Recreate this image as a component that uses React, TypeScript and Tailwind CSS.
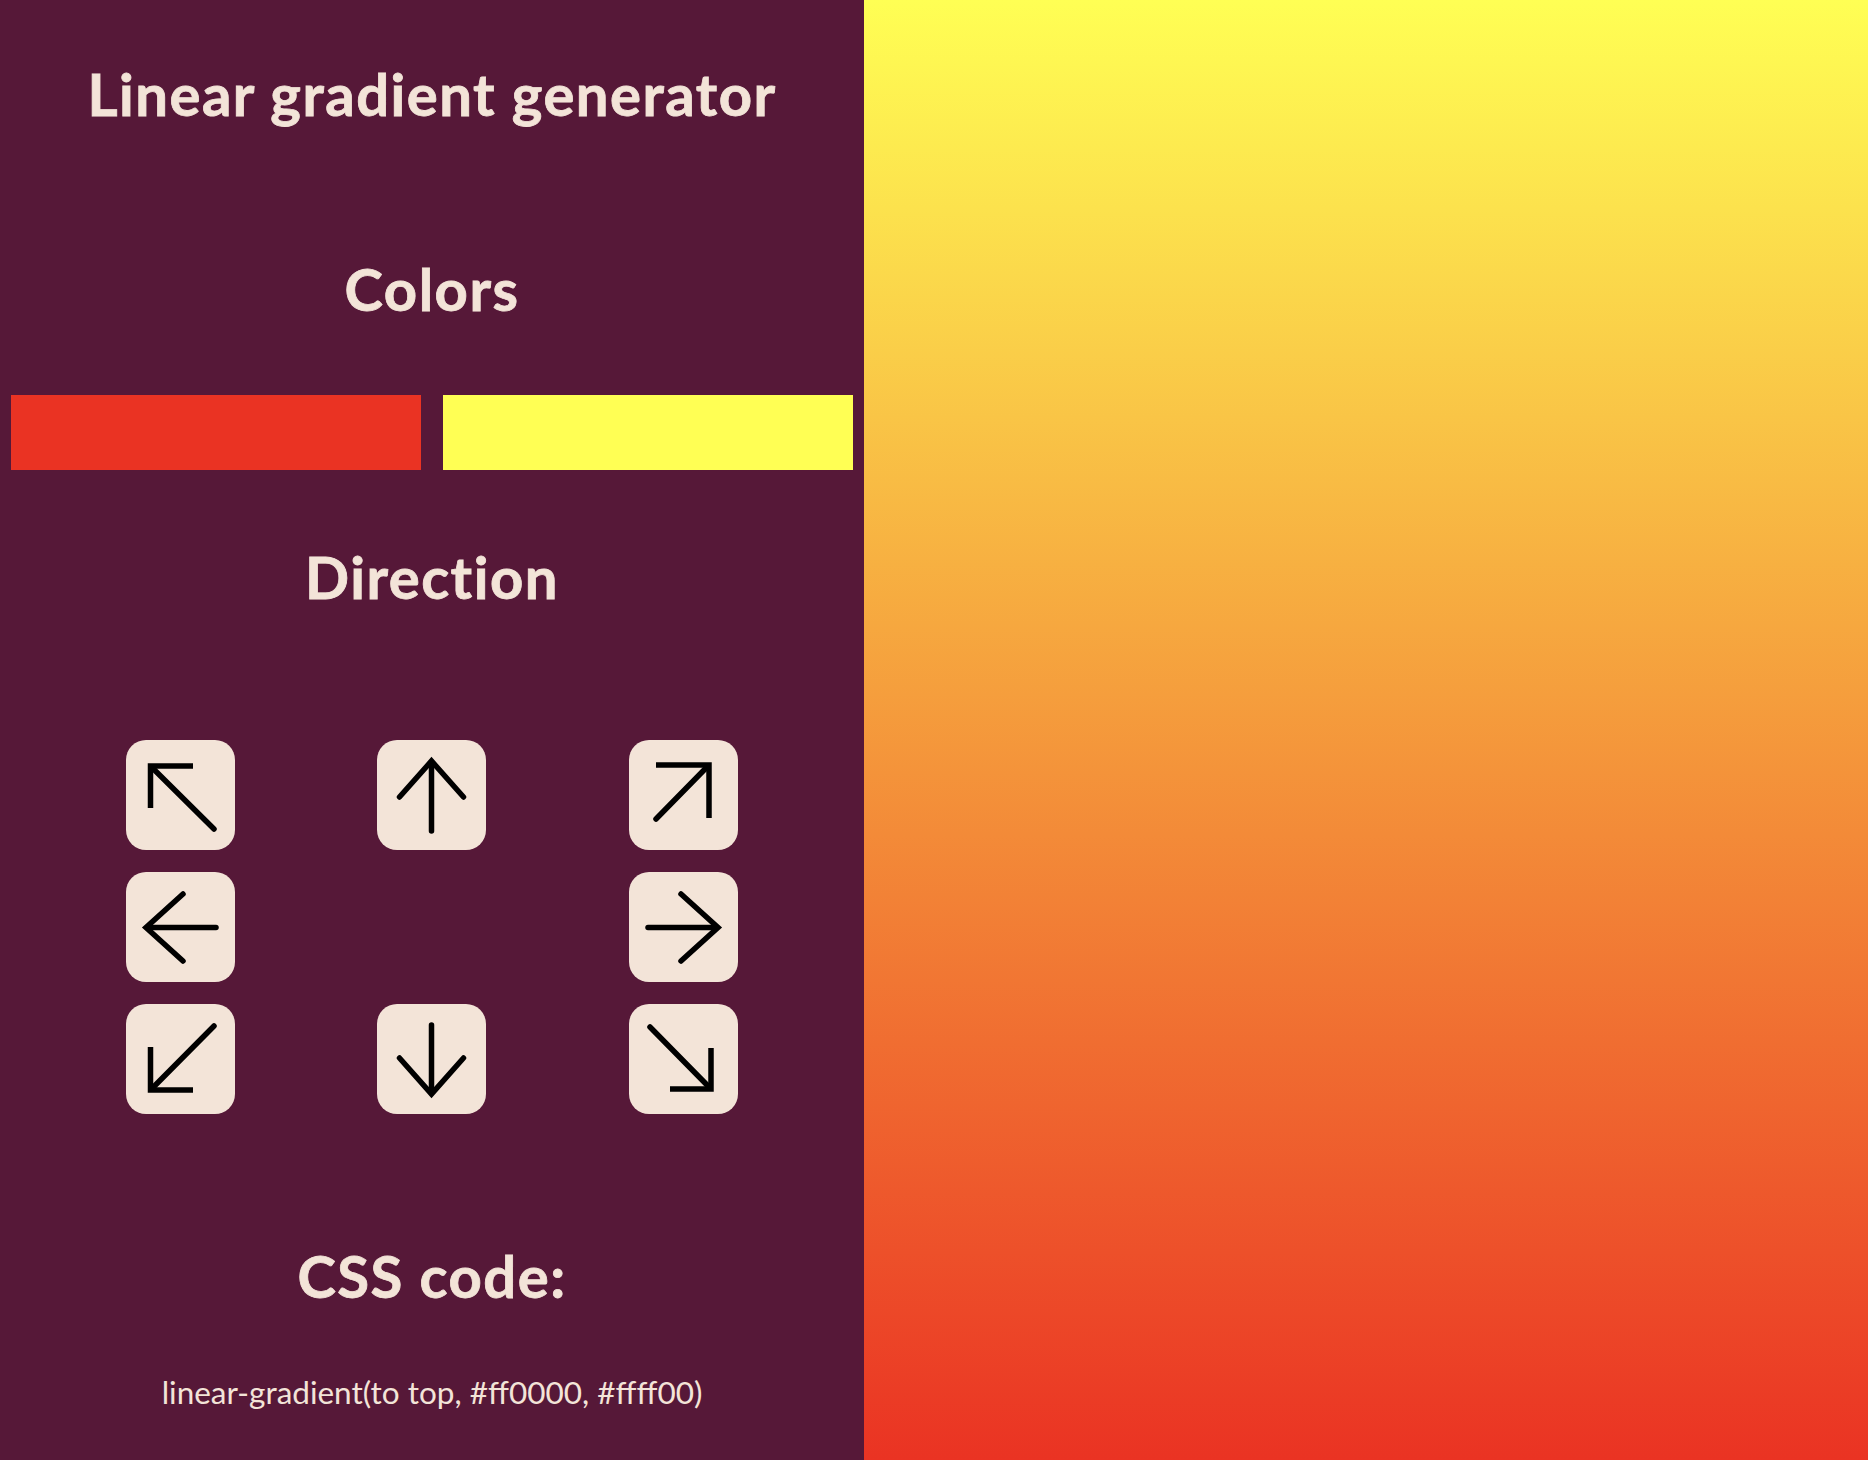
import React from 'react';

type Dir = 'nw' | 'n' | 'ne' | 'w' | 'e' | 'sw' | 's' | 'se';

// arrow strokes drawn in the button's own 109px box
const arrowPaths: Record<Dir, { head: string; shaft: string; square: boolean }> = {
    nw: { head: 'M24.5 67 V25 H67', shaft: 'M27 27.5 L88 88', square: true },
    n: { head: 'M22.5 56 L54.5 20 L86.5 56', shaft: 'M54.5 21 V90', square: false },
    ne: { head: 'M27 24 H80 V77', shaft: 'M77.5 26.5 L27 78', square: true },
    w: { head: 'M57 21 L20 54.5 L57 88', shaft: 'M21 54.5 H90', square: false },
    e: { head: 'M52 21 L89 54.5 L52 88', shaft: 'M19 54.5 H88', square: false },
    sw: { head: 'M24.5 42 V85 H67', shaft: 'M27 82.5 L88 21', square: true },
    s: { head: 'M22.5 53 L54.5 89 L86.5 53', shaft: 'M54.5 20 V88', square: false },
    se: { head: 'M41 84 H82 V43', shaft: 'M79.5 81.5 L21 22', square: true },
};

const ArrowButton: React.FC<{ dir: Dir }> = ({ dir }) => {
    const p = arrowPaths[dir];
    return (
        <button className="w-[109px] h-[110px] rounded-[20px] bg-[#f3e4d8] flex items-center justify-center">
            <svg width="109" height="109" viewBox="0 0 109 109" fill="none" stroke="#000" strokeWidth="5.5">
                <path d={p.head} strokeLinecap={p.square ? 'butt' : 'round'} strokeLinejoin="miter" />
                <path d={p.shaft} strokeLinecap="round" />
            </svg>
        </button>
    );
};

const headingClass = "h-[64px] leading-[64px] text-[58px] font-bold tracking-[1.5px] text-[#f3e4d8] [-webkit-text-stroke:0.8px_#f3e4d8] text-center";

export default function App() {
    const grid: (Dir | null)[] = ['nw', 'n', 'ne', 'w', null, 'e', 'sw', 's', 'se'];
    return (
        <div className="w-full h-screen flex font-['Lato','Open_Sans',sans-serif]">
            <div className="w-[864px] h-full bg-[#561838] flex flex-col items-center shrink-0">
                <h1 className={`${headingClass} mt-[62px]`}>Linear gradient generator</h1>
                <h2 className={`${headingClass} mt-[131px]`}>Colors</h2>
                <div className="w-full flex justify-between px-[11px] mt-[74px]">
                    <div className="w-[410px] h-[75px] bg-[#ea3323]"></div>
                    <div className="w-[410px] h-[75px] bg-[#ffff54]"></div>
                </div>
                <h2 className={`${headingClass} mt-[75px]`}>Direction</h2>
                <div className="w-[755px] grid grid-cols-3 justify-items-center gap-y-[22px] mt-[131px]">
                    {grid.map((d, i) => d ? <ArrowButton key={i} dir={d} /> : <div key={i} className="w-[109px] h-[110px]"></div>)}
                </div>
                <h2 className={`${headingClass} mt-[130px]`}>CSS code:</h2>
                <p className="mt-[64px] h-[40px] leading-[40px] text-[31.5px] text-[#f3e4d8]">
                    linear-gradient(to top, #ff0000, #ffff00)
                </p>
            </div>
            <div className="flex-1 h-full bg-linear-to-t/srgb from-[#ea3323] to-[#ffff54]"></div>
        </div>
    );
}
